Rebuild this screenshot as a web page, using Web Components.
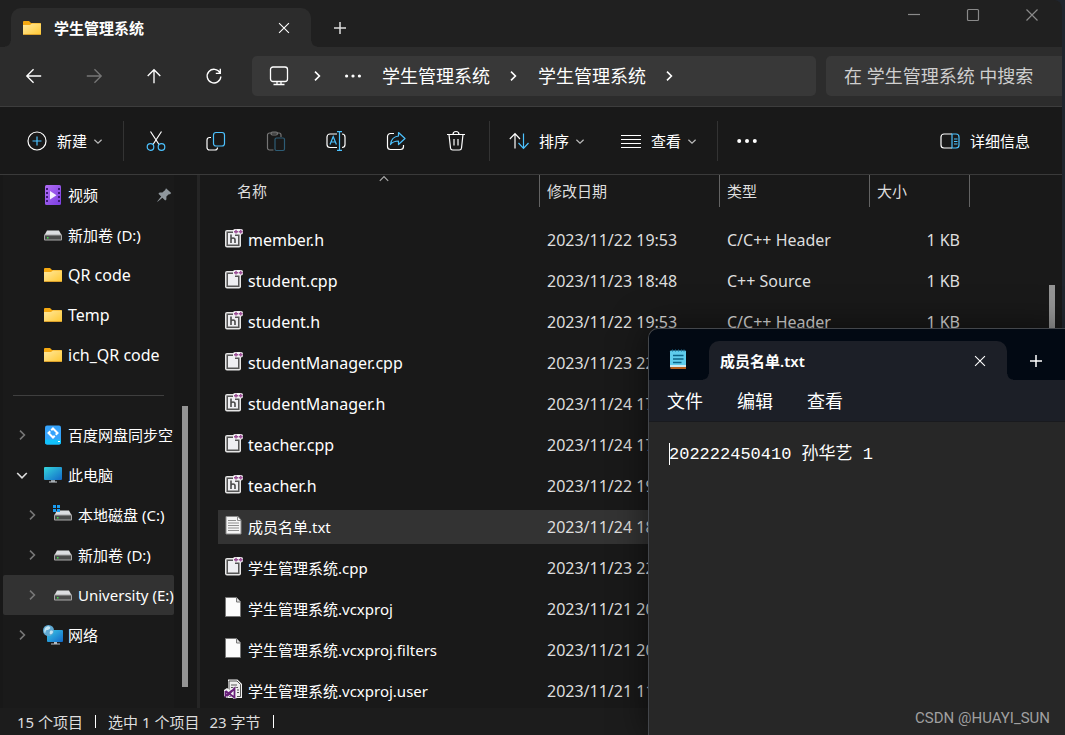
<!DOCTYPE html>
<html lang="zh-CN">
<head>
<meta charset="utf-8">
<title>学生管理系统</title>
<style>
  html, body { margin: 0; height: 100%; }
  body {
    position: relative; overflow: hidden; background: #20252d; color: #fff;
    font: 15px/20px "Noto Sans", "Noto Sans CJK SC", sans-serif;
  }
</style>
</head>
<body>
<explorer-window></explorer-window>
<notepad-window></notepad-window>

<script>
const RESET = `
  *, *::before, *::after { box-sizing: border-box; }
  button { appearance: none; border: 0; margin: 0; padding: 0; background: none; color: inherit; font: inherit; cursor: pointer; }
  a { color: inherit; text-decoration: none; }
`;

/* ---------- icons ---------- */
const DRIVE = `<path d="M4 5.500h12l2.500 4.500h-17z" fill="#dcdde0"/><rect x="1" y="9.500" width="18" height="6" rx="1" fill="#a9a9a9"/><rect x="2" y="10.500" width="16" height="4" fill="#4b4b4b"/><rect x="4" y="12" width="1.500" height="1.500" fill="#3fe04a"/>`;
const SOURCE = `<rect x="1" y="2" width="16" height="17.500" rx="2" fill="#e6e6e6"/><rect x="2.500" y="3.500" width="13" height="14.500" fill="#555"/><path d="M4 5h7v3h3v8.500H4z" fill="#efeff2"/><rect x="9" y="1" width="10" height="5.500" rx="2" fill="#f3f3f3"/><path d="M10 3.700h4M12 1.800v3.800M14.700 3.700h4M16.700 1.800v3.800" stroke="#9b4f96" stroke-width="1.500"/>`;
const ICONS = {
  folder: `<defs><linearGradient id="g" x1="0" y1="0" x2="1" y2="1"><stop offset="0" stop-color="#ffe9a0"/><stop offset="1" stop-color="#ffc832"/></linearGradient></defs><path d="M1 4a1 1 0 0 1 1-1h5l2 2h9a1 1 0 0 1 1 1v3H1z" fill="#f5a911"/><path d="M1 7h7l2-1.500h9V16a1 1 0 0 1-1 1H2a1 1 0 0 1-1-1z" fill="url(#g)"/><path d="M1.500 16.500h17" stroke="#dca12c"/>`,
  video: `<defs><linearGradient id="g" x1="0" y1="0" x2="1" y2="1"><stop offset="0" stop-color="#b26df5"/><stop offset="1" stop-color="#7a3ee0"/></linearGradient></defs><rect x="2" width="16" height="20" rx="1.500" fill="url(#g)"/><path d="M4 3v15M16 3v15" stroke="#3d1a77" stroke-width="2" stroke-dasharray="2 2"/><path d="M7 6v8.500l6.500-4.200z" fill="#f4f0ff"/>`,
  drive: DRIVE,
  windrive: DRIVE + `<path d="M0 0h3v3H0zM4 0h3v3H4zM0 4h3v3H0zM4 4h3v3H4z" fill="#1a9cf0"/>`,
  pc: `<defs><linearGradient id="g" x1="0" y1="0" x2="1" y2="1"><stop offset="0" stop-color="#35d6dc"/><stop offset="1" stop-color="#1269c9"/></linearGradient></defs><rect x="1" y="2" width="18" height="13" rx="1" fill="url(#g)"/><path d="M8 15h4v2H8z" fill="#8e979e"/><path d="M6 17h8" stroke="#c9d0d5"/>`,
  network: `<defs><linearGradient id="g" x1="0" y1="0" x2="1" y2="1"><stop offset="0" stop-color="#3ac9e6"/><stop offset="1" stop-color="#1269c9"/></linearGradient></defs><rect x="4" y="5" width="16" height="12" rx="1" fill="url(#g)"/><path d="M11 17h3v2h-3zM8 18.500h9v1H8z" fill="#b5bcc2"/><circle cx="5.500" cy="5.500" r="5.500" fill="#5fa9d3"/><path d="M2 3c2-2 4-2 5-1s-1 3-3 3-1 3-2 3-1-3 0-5zM7 6c2-1 3 0 3 1s-2 3-3 2 0-2 0-3z" fill="#c3e5f3"/>`,
  baidu: `<rect x="2" y="0.500" width="16" height="19" rx="2" fill="#36a3fb"/><path d="M2 14.500h16V17.500a2 2 0 0 1-2 2H4a2 2 0 0 1-2-2z" fill="#12c2fb"/><path d="M10 3.500L14.500 8 10 12.500 5.500 8z" fill="none" stroke="#fff" stroke-width="2"/><path d="M6.500 4.500l7 7" stroke="#36a3fb" stroke-width="1.500"/><path d="M15 16.500h2" stroke="#fff"/>`,
  pin: `<path d="M12.500 1.500l6.500 6-1.500 1.500-1.500 0-3 3 0 3.500-1.500 1.500-3.500-3.500-6 5-.5-.5 5-6-3.500-3.500L4.500 7l3.500-.2 3.500-3z" fill="#8f979d"/>`,
  h: SOURCE + `<path d="M7 6.500v8.500M7 11.500q0-1.500 2-1.500t2 1.800V15" fill="none" stroke="#4a4a4a" stroke-width="1.600"/>`,
  cpp: SOURCE,
  txt: `<path d="M2 1.500h12l3 3.500v14H2z" fill="#f5f5f5" stroke="#8c8c8c"/><path d="M4 5.500h8M4 8h11M4 10.500h11M4 13h11M4 15.500h11" stroke="#8f8f8f"/><path d="M13.500 1.500v4H17" fill="none" stroke="#8c8c8c"/>`,
  file: `<path d="M1.500.5h11l4 4.500v14.500h-15z" fill="#fcfcfc" stroke="#777"/><path d="M12.500.5V5h4" fill="#ddd" stroke="#777"/>`,
  user: `<path d="M4 .5h9.500L18 5v14H4z" fill="#f3f3f3"/><path d="M5 2h8l3.500 3.500v12H5z" fill="#eee" stroke="#555"/><path d="M7 6h6M7 8.500h7M11 11h4M11 13.500h4" stroke="#555"/><path d="M0 11l3-2 3 2 4-3 3 1v10l-3 1-4-3-3 2-3-2z" fill="#f3f3f3"/><path d="M1.500 12v5l6.500-5.500M1.500 12l9 6.500v-9L3 17" fill="none" stroke="#68217a" stroke-width="1.800"/>`,
  notepad: `<rect x="2" y="1.500" width="16" height="17" rx="1" fill="#5fcdec"/><path d="M2 17h16" stroke="#eef3f5" stroke-width="1.500"/><path d="M2.500 19h15.500" stroke="#b9601c" stroke-width="2"/><path d="M4.500 2.500V.5M7.500 2.500V.5M10.500 2.500V.5M13.500 2.500V.5M16 2.500V.5" stroke="#1d6f94"/><path d="M5 6.500h10.500M5 10h10.500M5 13.500h8.500" stroke="#0c6487" stroke-width="1.600"/>`,
  close: `<path d="M4.500 4.500l11 11M15.500 4.500l-11 11" class="s"/>`,
  plus: `<path d="M10 4v12M4 10h12" class="s" stroke-width="1.500"/>`,
  min: `<path d="M4 9.500h12" class="s"/>`,
  max: `<rect x="4.500" y="4.500" width="11" height="11" rx="1" class="s"/>`,
  back: `<path d="M18 10H2M9.500 2.500L2 10l7.500 7.500" class="s" stroke-width="1.500"/>`,
  forward: `<path d="M2 10H18M10.500 2.500L18 10l-7.500 7.500" class="s" stroke-width="1.500"/>`,
  up: `<path d="M10 18V3M3 10L10 3l7 7" class="s" stroke-width="1.500"/>`,
  refresh: `<path d="M16.700 6.500A7.600 7.600 0 1 0 17.600 10.500M17 2v5H12" class="s" stroke-width="1.500"/>`,
  monitor: `<rect x="1.500" y="1" width="17" height="14.500" rx="2.500" class="s" stroke-width="1.300"/><path d="M8 15.500V18M12 15.500V18M4.500 18.500h11" class="s" stroke-width="1.300"/>`,
  right: `<path d="M7.500 4.500l5.500 5.500-5.500 5.500" class="s" stroke-width="2"/>`,
  down: `<path d="M4 7.500L10 13.500l6-6" class="s" stroke-width="2"/>`,
  caret: `<path d="M4 8l6 5.500L16 8" class="s" stroke-width="2"/>`,
  sortup: `<path d="M3 13l7-7 7 7" class="s" stroke-width="2"/>`,
  dots: `<path d="M2 10h.01M10 10h.01M18 10h.01" class="s" stroke-width="4" stroke-linecap="round"/>`,
  more: `<path d="M2.200 10h.01M10 10h.01M17.800 10h.01" class="s" stroke-width="4" stroke-linecap="round"/>`,
  add: `<circle cx="10" cy="10" r="9" class="s"/><path d="M10 5.500v9M5.500 10h9" class="b"/>`,
  cut: `<path d="M4.500.5l8.500 13M15.500.5L7 13.500" class="s"/><circle cx="4.500" cy="16" r="3.300" class="b"/><circle cx="15.500" cy="16" r="3.300" class="b"/>`,
  copy: `<path d="M5 6.500H3.500A2.500 2.500 0 0 0 1 9v7.500A2.500 2.500 0 0 0 3.500 19H9a2.500 2.500 0 0 0 2.500-2.500" class="s"/><rect x="7.500" y="1.500" width="11" height="13.500" rx="2.500" class="b"/>`,
  paste: `<g opacity=".4"><path d="M7.500 19H3.500A2 2 0 0 1 1.500 17V4a2 2 0 0 1 2-2H13a2 2 0 0 1 2 2v2" class="s"/><rect x="5" y="1" width="6.500" height="3" rx="1.500" class="s"/><rect x="9" y="7" width="9.500" height="12.500" rx="1.500" class="b"/></g>`,
  rename: `<path d="M11 3H4a3 3 0 0 0-3 3v7.500a3 3 0 0 0 3 3h7M16 3a3 3 0 0 1 3 3v7.500a3 3 0 0 1-3 3" class="s"/><path d="M4 13.500L7.200 5.500l3.200 8M5.200 11h4M13.500 1v18M11 .7h5M11 19.300h5" class="b"/>`,
  share: `<path d="M8 2.500H4.500A3 3 0 0 0 1.500 5.500V15.500a3 3 0 0 0 3 3h10a3 3 0 0 0 3-3V14" class="s"/><path d="M12.500 1.500L19 7.500l-6.500 6v-3.500C9 10 6.500 11 4.500 13.500 5 9 8 5.500 12.500 5z" class="b" stroke-linejoin="round"/>`,
  trash: `<path d="M1 3.500h18M7 3.500a3 3 0 0 1 6 0M3 3.500l1.500 13.500a2.200 2.200 0 0 0 2.200 2h6.600a2.200 2.200 0 0 0 2.200-2L17 3.500M8 8v6.500M12 8v6.500" class="s"/>`,
  sort: `<path d="M6 17.500V3M.8 8L6 2.700 11 8" class="s"/><path d="M14.500 2.500v14.500M9.500 12l5 5.300 5-5.300" class="b"/>`,
  view: `<path d="M0 4.500h20M0 8.500h20M0 12.500h20M0 16.500h20" class="s"/>`,
  details: `<path d="M12 3H4a3 3 0 0 0-3 3v8a3 3 0 0 0 3 3h8" class="s"/><path d="M12 3h4a3 3 0 0 1 3 3v8a3 3 0 0 1-3 3h-4zM14 8h3.500M14 10.500h3.500M14 13h3.500" class="b"/>`
};

customElements.define('app-icon', class extends HTMLElement {
  connectedCallback() {
    if (this.shadowRoot) return;
    this.attachShadow({ mode: 'open' }).innerHTML = `
      <style>
        :host { display: block; flex: none; width: var(--size, 20px); height: var(--size, 20px); }
        svg { display: block; width: 100%; height: 100%; overflow: visible; }
        .s, .b { fill: none; stroke: currentColor; }
        .s:not([stroke-width]), .b:not([stroke-width]) { stroke-width: 1.2; }
        .b { stroke: #4cc2ff; }
      </style>
      <svg viewBox="0 0 20 20" aria-hidden="true">${ICONS[this.getAttribute('name')]}</svg>`;
  }
});

function define(name, html) {
  const template = document.createElement('template');
  template.innerHTML = html;
  customElements.define(name, class extends HTMLElement {
    constructor() {
      super();
      this.attachShadow({ mode: 'open' }).append(template.content.cloneNode(true));
    }
  });
}

/* A window tab whose feet flare out into the bar below it. */
define('window-tab', `
  <style>${RESET}
    :host {
      position: relative; display: flex; align-items: center; flex: none;
      width: 300px; padding: 0 18px 0 11px; border-radius: 10px 10px 0 0;
      background: var(--tab); font-weight: 600;
    }
    :host::before, :host::after { content: ""; position: absolute; bottom: 0; width: 6px; height: 6px; }
    :host::before { left: -6px; background: radial-gradient(circle at 0 0, transparent 5px, var(--tab) 6px); }
    :host::after { right: -6px; background: radial-gradient(circle at 100% 0, transparent 5px, var(--tab) 6px); }
    .title { flex: 1; display: flex; align-items: center; gap: 12px; }
    button { --size: 18px; }
  </style>
  <div class="title"><slot></slot></div>
  <button aria-label="关闭标签页"><app-icon name="close"></app-icon></button>`);

define('title-bar', `
  <style>${RESET}
    :host { display: flex; align-items: stretch; height: 47px; padding: 8px 0 0 11px; background: #202020; --tab: #2c2c2c; }
    .new { width: 58px; display: grid; place-items: center; color: #ddd; }
    .controls { display: flex; margin: -8px 1px 0 auto; height: 30px; color: #8a8a8a; }
    .controls button { width: 59px; display: grid; place-items: center; }
  </style>
  <window-tab><app-icon name="folder"></app-icon><span>学生管理系统</span></window-tab>
  <button class="new" aria-label="新标签页"><app-icon name="plus"></app-icon></button>
  <div class="controls">
    <button aria-label="最小化"><app-icon name="min"></app-icon></button>
    <button aria-label="最大化"><app-icon name="max"></app-icon></button>
    <button aria-label="关闭"><app-icon name="close"></app-icon></button>
  </div>`);

define('nav-bar', `
  <style>${RESET}
    :host {
      display: flex; align-items: center; height: 60px; padding: 0 0 2px 4px;
      background: #2c2c2c; border-bottom: 1px solid #3d3d3d; font-size: 18px; line-height: 24px;
    }
    .step { width: 60px; height: 40px; display: grid; place-items: center; --size: 18px; }
    .step:disabled { color: #767676; }
    nav {
      flex: 1; min-width: 0; height: 40px; margin-left: 8px; padding-left: 17px; border-radius: 5px;
      display: flex; align-items: center; background: #383838; white-space: nowrap;
    }
    nav > app-icon { --size: 16px; margin: 0 17px 0 15px; }
    nav > .place { --size: 20px; margin: 0; }
    nav > .place + app-icon { margin: 0 20px; }
    nav > .dots { margin: 0 21px 0 0; }
    input {
      flex: none; width: 236px; height: 40px; margin-left: 10px; padding: 0 0 0 18px; border: 0;
      border-radius: 5px 0 0 5px; background: #383838; font: inherit; outline: 0;
    }
    input::placeholder { color: #cfcfcf; opacity: 1; }
  </style>
  <button class="step" aria-label="后退"><app-icon name="back"></app-icon></button>
  <button class="step" aria-label="前进" disabled><app-icon name="forward"></app-icon></button>
  <button class="step" aria-label="上移"><app-icon name="up"></app-icon></button>
  <button class="step" aria-label="刷新"><app-icon name="refresh"></app-icon></button>
  <nav aria-label="地址">
    <app-icon class="place" name="monitor"></app-icon><app-icon name="right"></app-icon>
    <app-icon class="dots" name="dots"></app-icon>
    <a href="#parent">学生管理系统</a><app-icon name="right"></app-icon>
    <a href="#current">学生管理系统</a><app-icon name="right"></app-icon>
  </nav>
  <input type="search" aria-label="搜索" placeholder="在 学生管理系统 中搜索">`);

define('command-bar', `
  <style>${RESET}
    :host {
      display: flex; align-items: center; height: 68px; padding: 0 32px 0 27px;
      background: #191919; border-bottom: 1px solid #3a3a3a;
    }
    button { display: flex; align-items: center; height: 40px; gap: 10px; white-space: nowrap; }
    .menu app-icon[name="caret"] { --size: 12px; margin-left: -5px; color: #bbb; }
    .tool { width: 60px; justify-content: center; }
    .menu + .menu { margin-left: 35px; }
    i { flex: none; width: 1px; height: 40px; margin: 0 19px; background: #333; }
    i.left { margin-right: 2px; }
    i.right { margin-left: 3px; }
    .details { margin-left: auto; }
  </style>
  <button class="menu"><app-icon name="add"></app-icon>新建<app-icon name="caret"></app-icon></button>
  <i class="left"></i>
  <button class="tool" aria-label="剪切"><app-icon name="cut"></app-icon></button>
  <button class="tool" aria-label="复制"><app-icon name="copy"></app-icon></button>
  <button class="tool" aria-label="粘贴"><app-icon name="paste"></app-icon></button>
  <button class="tool" aria-label="重命名"><app-icon name="rename"></app-icon></button>
  <button class="tool" aria-label="共享"><app-icon name="share"></app-icon></button>
  <button class="tool" aria-label="删除"><app-icon name="trash"></app-icon></button>
  <i class="right"></i>
  <button class="menu"><app-icon name="sort"></app-icon>排序<app-icon name="caret"></app-icon></button>
  <button class="menu"><app-icon name="view"></app-icon>查看<app-icon name="caret"></app-icon></button>
  <i></i>
  <button aria-label="更多"><app-icon name="more"></app-icon></button>
  <button class="details"><app-icon name="details"></app-icon>详细信息</button>`);

define('side-item', `
  <style>${RESET}
    :host { display: block; }
    a { display: flex; align-items: center; height: 40px; padding-left: 11px; white-space: nowrap; }
    :host([nested]) a { padding-left: 21px; }
    :host([selected]) a { background: #323232; border-radius: 2px; }
    :host([latin]) { font-size: 16px; }
    .arrow { flex: none; display: block; width: 16px; margin-right: 13px; --size: 16px; color: #777; }
    .label { margin-left: 5px; }
    ::slotted([slot="end"]) { --size: 16px; margin-left: auto; margin-right: 2px; }
  </style>
  <a href="#place"><span class="arrow"><slot name="arrow"></slot></span><slot name="icon"></slot><span class="label"><slot></slot></span><slot name="end"></slot></a>`);

define('side-nav', `
  <style>${RESET}
    :host { display: flex; width: 200px; padding-left: 3px; background: #181818; border-right: 3px solid #252525; overflow: hidden; }
    nav { width: 171px; overflow: hidden; background: #1a1a1a; }
    hr { height: 1px; margin: 20px 10px 19px; border: 0; background: #3f3f3f; }
    .open { color: #ddd; }
    .thumb { width: 6px; height: 281px; margin: 231px 0 0 8px; background: #949494; }
  </style>
  <nav aria-label="导航窗格">
    <side-item><app-icon slot="icon" name="video"></app-icon>视频<app-icon slot="end" name="pin"></app-icon></side-item>
    <side-item><app-icon slot="icon" name="drive"></app-icon>新加卷 (D:)</side-item>
    <side-item latin><app-icon slot="icon" name="folder"></app-icon>QR code</side-item>
    <side-item latin><app-icon slot="icon" name="folder"></app-icon>Temp</side-item>
    <side-item latin><app-icon slot="icon" name="folder"></app-icon>ich_QR code</side-item>
    <hr>
    <side-item><app-icon slot="arrow" name="right"></app-icon><app-icon slot="icon" name="baidu"></app-icon>百度网盘同步空</side-item>
    <side-item><app-icon class="open" slot="arrow" name="down"></app-icon><app-icon slot="icon" name="pc"></app-icon>此电脑</side-item>
    <side-item nested><app-icon slot="arrow" name="right"></app-icon><app-icon slot="icon" name="windrive"></app-icon>本地磁盘 (C:)</side-item>
    <side-item nested><app-icon slot="arrow" name="right"></app-icon><app-icon slot="icon" name="drive"></app-icon>新加卷 (D:)</side-item>
    <side-item nested selected><app-icon slot="arrow" name="right"></app-icon><app-icon slot="icon" name="drive"></app-icon>University (E:)</side-item>
    <side-item><app-icon slot="arrow" name="right"></app-icon><app-icon slot="icon" name="network"></app-icon>网络</side-item>
  </nav>
  <div class="thumb"></div>`);

const FILES = [
  ['h', 'member.h', '2023/11/22 19:53', 'C/C++ Header', '1 KB'],
  ['cpp', 'student.cpp', '2023/11/23 18:48', 'C++ Source', '1 KB'],
  ['h', 'student.h', '2023/11/22 19:53', 'C/C++ Header', '1 KB'],
  ['cpp', 'studentManager.cpp', '2023/11/23 22'],
  ['h', 'studentManager.h', '2023/11/24 17'],
  ['cpp', 'teacher.cpp', '2023/11/24 17'],
  ['h', 'teacher.h', '2023/11/22 19'],
  ['txt', '成员名单.txt', '2023/11/24 18'],
  ['cpp', '学生管理系统.cpp', '2023/11/23 22'],
  ['file', '学生管理系统.vcxproj', '2023/11/21 20'],
  ['file', '学生管理系统.vcxproj.filters', '2023/11/21 20'],
  ['user', '学生管理系统.vcxproj.user', '2023/11/21 11']
];
const isLatin = name => /^[\x20-\x7e]+$/.test(name);

define('file-list', `
  <style>${RESET}
    :host { display: flex; flex: 1; min-width: 0; overflow: hidden; padding-left: 18px; background: #191919; }
    .scroll { flex: 1; min-width: 0; }
    table { width: 752px; table-layout: fixed; border-collapse: separate; border-spacing: 0; }
    col.name { width: 322px; } col.date { width: 180px; } col.type { width: 150px; } col.size { width: 100px; }
    th { position: relative; height: 45px; padding: 0; vertical-align: top; text-align: left; font-weight: 400; color: #dedede; }
    th span { display: flex; align-items: center; height: 32px; padding-left: 7px; border-right: 1px solid #636363; }
    th:first-child span { padding-left: 19px; }
    th app-icon { position: absolute; top: -2px; left: 160px; --size: 12px; color: #aaa; }
    td { height: 41px; padding: 0 0 0 7px; border: solid transparent; border-width: 3px 0 4px; background-clip: padding-box; color: #dedede; font-size: 16px; white-space: nowrap; overflow: hidden; }
    td:first-child { padding-left: 6px; color: #fff; }
    td:last-child { text-align: right; padding-right: 10px; }
    .file { display: flex; align-items: center; gap: 4px; font-size: 15px; }
    .file.latin { font-size: 16px; }
    .file app-icon { margin-bottom: 4px; }
    .selected td { background-color: #333; }
    .thumb { width: 6px; height: 300px; margin: 110px 7px 0 0; background: #949494; }
  </style>
  <div class="scroll">
    <table>
      <colgroup><col class="name"><col class="date"><col class="type"><col class="size"></colgroup>
      <thead><tr><th><span>名称</span><app-icon name="sortup"></app-icon></th><th><span>修改日期</span></th><th><span>类型</span></th><th><span>大小</span></th></tr></thead>
      <tbody>${FILES.map(([icon, name, date, type = '', size = '']) => `
        <tr${icon === 'txt' ? ' class="selected"' : ''}><td><div class="file${isLatin(name) ? ' latin' : ''}"><app-icon name="${icon}"></app-icon>${name}</div></td><td>${date}</td><td>${type}</td><td>${size}</td></tr>`).join('')}
      </tbody>
    </table>
  </div>
  <div class="thumb"></div>`);

define('status-bar', `
  <style>${RESET}
    :host { display: flex; align-items: center; height: 27px; padding-left: 17px; gap: 12px; background: #1c1c1c; color: #dedede; white-space: nowrap; }
    i { width: 1px; height: 13px; background: #fff; }
    .group { display: flex; gap: 10px; }
  </style>
  <span>15 个项目</span><i></i><div class="group"><span>选中 1 个项目</span><span>23 字节</span></div><i></i>`);

define('explorer-window', `
  <style>${RESET}
    :host {
      display: grid; grid-template-rows: auto auto auto minmax(0, 1fr) auto; grid-template-columns: minmax(0, 1fr);
      height: 100vh; margin-right: 3px; overflow: hidden; border-radius: 0 8px 0 0;
    }
    .content { display: flex; min-height: 0; }
  </style>
  <title-bar></title-bar>
  <nav-bar></nav-bar>
  <command-bar></command-bar>
  <div class="content"><side-nav></side-nav><file-list></file-list></div>
  <status-bar></status-bar>`);

define('notepad-window', `
  <style>${RESET}
    :host {
      position: absolute; left: 648px; top: 328px; right: 0; bottom: 0; overflow: hidden;
      display: flex; flex-direction: column; border: solid #43464b; border-width: 1px 0 0 1px;
      border-radius: 10px 0 0 0; background: #272727; box-shadow: 0 0 36px rgba(0, 0, 0, .55);
      --tab: #1c1f27;
    }
    header { display: flex; height: 51px; padding: 12px 0 0 19px; background: #020913; }
    header > app-icon { margin: 8px 21px 0 0; }
    window-tab { width: 298px; }
    .new { width: 62px; display: grid; place-items: center; }
    .menu { display: flex; gap: 34px; height: 42px; padding-left: 18px; background: var(--tab); border-bottom: 1px solid #191a1e; font-size: 18px; line-height: 24px; }
    .editor { position: relative; flex: 1; display: flex; padding: 21px 0 0 20px; }
    .editor::before { content: ""; position: absolute; left: 20px; top: 21px; width: 1px; height: 22px; background: #fff; }
    textarea {
      flex: 1; padding: 0; border: 0; outline: 0; resize: none; background: none; color: #fff;
      font: 17px/24px "Liberation Mono", "Noto Sans CJK SC", monospace;
    }
    .mark { position: absolute; right: 15px; bottom: 7px; font: 15px/20px Roboto, sans-serif; color: #a0a0a0; }
  </style>
  <header>
    <app-icon name="notepad"></app-icon>
    <window-tab><span>成员名单.txt</span></window-tab>
    <button class="new" aria-label="新标签页"><app-icon name="plus"></app-icon></button>
  </header>
  <div class="menu"><button>文件</button><button>编辑</button><button>查看</button></div>
  <div class="editor"><textarea aria-label="文本编辑器" spellcheck="false">202222450410 孙华艺 1</textarea></div>
  <div class="mark">CSDN @HUAYI_SUN</div>`);
</script>
</body>
</html>
